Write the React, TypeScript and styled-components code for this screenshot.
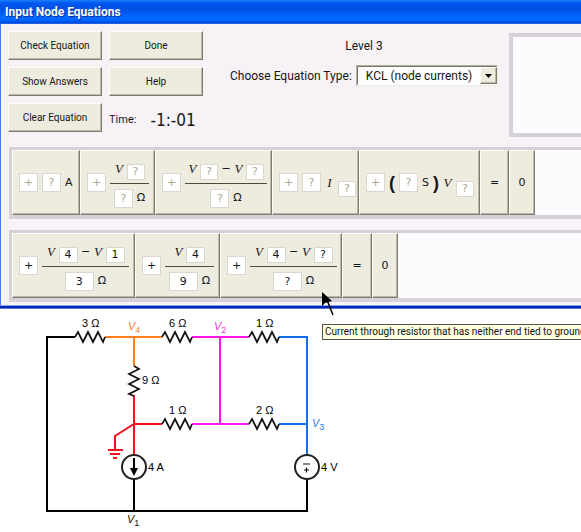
import React from "react";
import styled, { createGlobalStyle, css } from "styled-components";

const uiFont = 'Roboto, "DejaVu Sans Condensed", sans-serif';

const GlobalStyle = createGlobalStyle`
  * { box-sizing: border-box; }
  body {
    margin: 0;
    background: #fff;
    color: #161616;
    font: 10px/14px ${uiFont};
    overflow-x: hidden;
  }
  button, input, select { font: inherit; color: inherit; margin: 0; padding: 0; }
`;

const Page = styled.main`
  min-height: 100vh;
  overflow: hidden;
`;

const Dialog = styled.section`
  border-left: 1px solid #3d7df0;
  background: #f6f2f6;
`;

const TitleBar = styled.h1`
  margin: 0 0 0 -1px;
  height: 24px;
  padding-left: 5px;
  background: linear-gradient(#1a80ff 0, #0058ee 3px, #0050e6 9px, #0066ff 16px, #0068ff 20px, #0046d8 23px, #3b7bf0 24px);
  color: #fff;
  font: bold 12px/25px ${uiFont};
  text-shadow: 1px 1px #0a2f94;
  white-space: nowrap;
`;

const Toolbar = styled.div`
  display: flex;
  padding: 7px 0 10px 7px;
`;

const Commands = styled.div`
  display: grid;
  grid-template-columns: 94px 94px;
  grid-auto-rows: 29px;
  gap: 7px;
`;

const raised = css`
  background: #eeebdf;
  border: 1px solid;
  border-color: #fdfcf6 #7f7b6e #7f7b6e #fdfcf6;
  box-shadow: inset -1px -1px #bcb8a9;
`;

const CommandButton = styled.button`
  ${raised}
  white-space: nowrap;
`;

const Timer = styled.div`
  display: flex;
  align-items: center;
  gap: 14px;
  padding-top: 4px;
  font-size: 11px;
`;

const TimeValue = styled.output`
  font: 17px/20px "DejaVu Sans Condensed", sans-serif;
`;

const Settings = styled.div`
  display: flex;
  flex-direction: column;
  gap: 12px;
  margin-left: 27px;
  padding-top: 8px;
  white-space: nowrap;
`;

const Level = styled.p`
  margin: 0;
  text-align: center;
  font-size: 12px;
`;

const TypeField = styled.div`
  display: flex;
  align-items: center;
  justify-content: space-between;
  gap: 4px;
  width: 268px;
  font-size: 12px;
`;

const SelectFrame = styled.div`
  display: grid;
  grid-template-columns: 1fr 17px;
  width: 144px;
  height: 21px;
  border: 1px solid;
  border-color: #b5b1a1 #f1eddf #f1eddf #b5b1a1;
`;

const Select = styled.select`
  grid-area: 1 / 1 / 2 / 3;
  appearance: none;
  padding-left: 8px;
  border: 1px solid;
  border-color: #77746a #fff #fff #77746a;
  border-radius: 0;
  background: #fff;
`;

const DropMark = styled.span`
  grid-area: 1 / 2;
  ${raised}
  display: grid;
  place-items: center;
  margin: 1px 0;
  pointer-events: none;
`;

const Preview = styled.div`
  flex: 1;
  height: 104px;
  margin: 2px 0 0 11px;
  border: 4px solid #d4d2d6;
  border-right: 0;
  background: #fefbfe;
`;

const Strip = styled.div`
  display: flex;
  height: 72px;
  margin: 0 0 11px 8px;
  border: 3px solid #d4d2d6;
  border-bottom-width: 4px;
  border-right: 0;
  background: #fefbfe;
`;

const DialogFoot = styled.div`
  height: 4px;
  margin: -8px 0 0 -1px;
  border-top: 1px solid #7ea5ee;
  border-bottom: 1px solid #4c78dd;
  background: #0224b5;
`;

const termStyle = css<{ $w: number }>`
  ${raised}
  position: relative;
  display: flex;
  flex: none;
  align-items: center;
  gap: 4px;
  width: ${(p) => p.$w}px;
  padding-left: 6px;
  font-family: "DejaVu Sans", sans-serif;
  font-size: 11px;
`;

const PaletteTerm = styled.button<{ $w: number }>`
  ${termStyle}
`;

const Term = styled.div<{ $w: number }>`
  ${termStyle}
`;

const Symbol = styled.div<{ $w: number }>`
  ${termStyle}
  justify-content: center;
  padding: 0;
`;

const boxStyle = css<{ $sub?: boolean; $w?: number }>`
  flex: none;
  width: ${(p) => p.$w ?? (p.$sub ? 18 : 19)}px;
  height: ${(p) => (p.$sub ? 16 : 19)}px;
  border: 1px solid #d9d7cf;
  border-radius: 0;
  background: #fff;
  text-align: center;
`;

const Slot = styled.span<{ $sub?: boolean; $w?: number; $low?: boolean }>`
  ${boxStyle}
  line-height: ${(p) => (p.$sub ? 14 : 17)}px;
  color: #aaa896;
  ${(p) => p.$low && "margin-top: 12px;"}
`;

const Field = styled.input<{ $sub?: boolean; $w?: number }>`
  ${boxStyle}
`;

const SignButton = styled.button`
  ${boxStyle}
`;

const Fraction = styled.span<{ $w: number }>`
  display: flex;
  flex-direction: column;
  width: ${(p) => p.$w}px;
  padding-top: 4px;
`;

const Numerator = styled.span`
  display: flex;
  justify-content: center;
  gap: 3px;
  height: 22px;
  border-bottom: 1px solid #4c4a45;

  & > ${Slot}, & > ${Field} { margin-top: 2px; }
`;

const Denominator = styled.span`
  display: flex;
  align-items: center;
  justify-content: center;
  gap: 4px;
  padding-top: 5px;
`;

const Variable = styled.i`
  font: italic 13px/13px "Liberation Serif", serif;
  width: 9px;
  text-align: center;
`;

const Minus = styled.span`
  width: 10px;
  text-align: center;
`;

const Paren = styled.span`
  font: bold 18px/18px "Liberation Sans", sans-serif;
  width: 6px;
`;

const Pointer = styled.svg`
  position: absolute;
  z-index: 2;
  top: 58px;
  left: 100px;
`;

const Tooltip = styled.span`
  position: absolute;
  z-index: 1;
  top: 90px;
  left: 101px;
  padding: 0 2px;
  border: 1px solid #55554c;
  background: #ffffe1;
  color: #111;
  font: 10px/14px ${uiFont};
  white-space: nowrap;
`;

const Circuit = styled.svg`
  display: block;
  font: 11px "Liberation Sans", sans-serif;
`;

const commands = ["Check Equation", "Done", "Show Answers", "Help", "Clear Equation"];

type Over = { nodes: string[]; ohms: string };

const equation: (Over & { w: number; frac: number; tip?: string })[] = [
  { nodes: ["4", "1"], ohms: "3", w: 123, frac: 87 },
  { nodes: ["4"], ohms: "9", w: 85, frac: 49 },
  {
    nodes: ["4", "?"],
    ohms: "?",
    w: 122,
    frac: 87,
    tip: "Current through resistor that has neither end tied to ground",
  },
];

function PaletteFraction({ count, width }: { count: number; width: number }) {
  return (
    <Fraction $w={width}>
      <Numerator>
        {Array.from({ length: count }, (_, i) => (
          <React.Fragment key={i}>
            {i > 0 && <Minus>−</Minus>}
            <Variable>V</Variable>
            <Slot $sub>?</Slot>
          </React.Fragment>
        ))}
      </Numerator>
      <Denominator>
        <Slot>?</Slot>Ω
      </Denominator>
    </Fraction>
  );
}

const zigzag = "l3 -5 l5 10 l5 -10 l5 10 l5 -10 l5 10 l2 -5";

function Resistor({ x, y, label, vertical }: { x: number; y: number; label: string; vertical?: boolean }) {
  return (
    <>
      <path
        d={`M0 0 ${zigzag}`}
        transform={`translate(${x} ${y})${vertical ? " rotate(90)" : ""}`}
        fill="none"
        stroke="#111"
        strokeWidth="1.7"
      />
      <text x={vertical ? x + 8 : x + 7} y={vertical ? y + 18 : y - 10}>{label}</text>
    </>
  );
}

function NodeLabel({ x, y, n, color }: { x: number; y: number; n: number; color: string }) {
  return (
    <text x={x} y={y} fill={color}>
      <tspan fontStyle="italic">V</tspan>
      <tspan dy="3" fontSize="9">{n}</tspan>
    </text>
  );
}

export default function App() {
  return (
    <Page>
      <GlobalStyle />
      <Dialog>
        <TitleBar>Input Node Equations</TitleBar>
        <Toolbar>
          <Commands>
            {commands.map((c) => (
              <CommandButton key={c} type="button">{c}</CommandButton>
            ))}
            <Timer>
              <span>Time:</span>
              <TimeValue>-1:-01</TimeValue>
            </Timer>
          </Commands>
          <Settings>
            <Level>Level 3</Level>
            <TypeField>
              <label htmlFor="type">Choose Equation Type:</label>
              <SelectFrame>
                <Select id="type">
                  <option>KCL (node currents)</option>
                </Select>
                <DropMark>
                  <svg width="7" height="4" aria-hidden="true">
                    <path d="M0 0h7L3.500 4z" />
                  </svg>
                </DropMark>
              </SelectFrame>
            </TypeField>
          </Settings>
          <Preview />
        </Toolbar>

        <Strip>
          <PaletteTerm type="button" $w={68}>
            <Slot>+</Slot>
            <Slot>?</Slot>A
          </PaletteTerm>
          <PaletteTerm type="button" $w={75}>
            <Slot>+</Slot>
            <PaletteFraction count={1} width={39} />
          </PaletteTerm>
          <PaletteTerm type="button" $w={117}>
            <Slot>+</Slot>
            <PaletteFraction count={2} width={82} />
          </PaletteTerm>
          <PaletteTerm type="button" $w={87}>
            <Slot>+</Slot>
            <Slot>?</Slot>
            <Variable>I</Variable>
            <Slot $sub $low>?</Slot>
          </PaletteTerm>
          <PaletteTerm type="button" $w={121}>
            <Slot>+</Slot>
            <Paren>(</Paren>
            <Slot>?</Slot>S
            <Paren>)</Paren>
            <Variable>V</Variable>
            <Slot $sub $low>?</Slot>
          </PaletteTerm>
          <Symbol $w={29}>=</Symbol>
          <Symbol $w={26}>0</Symbol>
        </Strip>

        <Strip>
          {equation.map((t, i) => (
            <Term key={i} $w={t.w}>
              <SignButton type="button" aria-label="Sign">+</SignButton>
              <Fraction $w={t.frac}>
                <Numerator>
                  {t.nodes.map((n, j) => (
                    <React.Fragment key={j}>
                      {j > 0 && <Minus>−</Minus>}
                      <Variable>V</Variable>
                      <Field $sub $w={19} aria-label="Node number" defaultValue={n} />
                    </React.Fragment>
                  ))}
                </Numerator>
                <Denominator>
                  <Field $w={29} aria-label="Resistance in ohms" defaultValue={t.ohms} />Ω
                </Denominator>
              </Fraction>
              {t.tip && (
                <>
                  <Pointer width="16" height="26" aria-hidden="true">
                    <path d="M1 0V14L4 11L11 9Z" />
                    <path d="M6 8L12 23" stroke="#000" strokeWidth="1.500" />
                  </Pointer>
                  <Tooltip role="tooltip">{t.tip}</Tooltip>
                </>
              )}
            </Term>
          ))}
          <Symbol $w={30}>=</Symbol>
          <Symbol $w={26}>0</Symbol>
        </Strip>
        <DialogFoot />
      </Dialog>

      <Circuit width="360" height="222" viewBox="0 309 360 222" role="img" aria-label="Circuit diagram">
        <g fill="none" strokeWidth="2">
          <path d="M75 337H47V511H307V479M134 479V511" stroke="#000" />
          <path d="M105 337H162M134 337V366" stroke="#ff7f1a" />
          <path d="M192 337H249M220 337V424M192 424H249" stroke="#ff14ee" />
          <path d="M279 337H307V455M279 424H307" stroke="#0f6ee8" />
          <path d="M134 395V455M162 424H134L115 436V450M108 450H123M110 454H120M113 458H117" stroke="#f8101c" />
          <circle cx="134" cy="467" r="12" stroke="#222" />
          <circle cx="307" cy="467" r="12" stroke="#222" />
          <path d="M134 458V470" stroke="#000" />
          <path d="M303 464H310M304 470H309M306.500 467.500V472.500" stroke="#111" strokeWidth="1.200" />
        </g>
        <path d="M130 468H138L134 476Z" />
        <Resistor x={75} y={337} label="3 Ω" />
        <Resistor x={162} y={337} label="6 Ω" />
        <Resistor x={249} y={337} label="1 Ω" />
        <Resistor x={134} y={366} label="9 Ω" vertical />
        <Resistor x={162} y={424} label="1 Ω" />
        <Resistor x={249} y={424} label="2 Ω" />
        <text x="148" y="471">4 A</text>
        <text x="321" y="471">4 V</text>
        <NodeLabel x={128} y={330} n={4} color="#f08030" />
        <NodeLabel x={214} y={330} n={2} color="#f030e0" />
        <NodeLabel x={312} y={427} n={3} color="#2a7ee0" />
        <NodeLabel x={127} y={523} n={1} color="#111" />
      </Circuit>
    </Page>
  );
}
